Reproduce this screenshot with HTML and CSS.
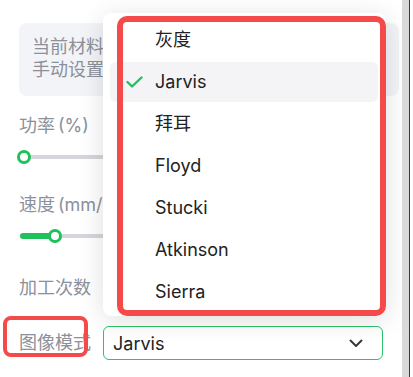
FILE: index.html
```html
<!DOCTYPE html>
<html lang="zh">
<head>
<meta charset="utf-8">
<link rel="stylesheet" href="styles.css">
</head>
<body>
<div class="page">
  <main class="panel">
    <div class="info">
      <div>当前材料</div>
      <div>手动设置</div>
    </div>
    <div class="label l-power">功率<span class="unit">(%)</span></div>
    <div class="slider s1">
      <div class="track"></div>
      <div class="fill" style="width:5px"></div>
      <div class="knob" style="left:-2px"></div>
    </div>
    <div class="label l-speed">速度<span class="unit">(mm/s)</span></div>
    <div class="slider s2">
      <div class="track"></div>
      <div class="fill" style="width:36px"></div>
      <div class="knob" style="left:29px"></div>
    </div>
    <div class="label l-count">加工次数</div>
    <div class="row">
      <div class="label row-label">图像模式</div>
      <div class="select">
        <span class="select-value">Jarvis</span>
        <svg class="chev" width="14" height="9" viewBox="0 0 14 9"><path d="M1.5 1.5 L7 7 L12.5 1.5" fill="none" stroke="#3a3a3a" stroke-width="2" stroke-linecap="round" stroke-linejoin="round"/></svg>
      </div>
    </div>

    <div class="popup">
      <div class="item">灰度</div>
      <div class="item active">
        <svg class="check" width="17" height="12" viewBox="0 0 17 12"><path d="M1.5 6 L6 10.5 L15.5 1.5" fill="none" stroke="#22c062" stroke-width="2.4" stroke-linecap="round" stroke-linejoin="round"/></svg>
        Jarvis
      </div>
      <div class="item">拜耳</div>
      <div class="item">Floyd</div>
      <div class="item">Stucki</div>
      <div class="item">Atkinson</div>
      <div class="item">Sierra</div>
    </div>
    <div class="mark mark-popup"></div>
    <div class="mark mark-label"></div>
  </main>
  <div class="scrollbar"></div>
  <div class="edge"></div>
</div>
</body>
</html>
```
FILE: styles.css
```css
* { box-sizing: border-box; }
html, body { margin: 0; padding: 0; background: #fff; }
body {
  font-family: Inter, "Noto Sans CJK SC", sans-serif;
  font-size: 18px;
  width: 413px;
  height: 377px;
  overflow: hidden;
}
.page {
  display: flex;
  height: 377px;
}
.panel {
  position: relative;
  width: 402px;
  flex: none;
  height: 377px;
  overflow: hidden;
  padding: 23px 0 0 19px;
}
.scrollbar {
  width: 7px;
  background: #d9d9d9;
  flex: none;
}
.edge {
  width: 1px;
  background: #3a3a3a;
  flex: none;
}
.info {
  width: 380px;
  background: #f3f4f7;
  border-radius: 8px;
  padding: 12px 13px 15px;
  color: #8b909a;
  line-height: 23px;
  font-size: 18px;
}
.label {
  color: #8b909a;
  line-height: 24px;
  height: 24px;
  white-space: nowrap;
}
.unit { margin-left: 3px; }
.l-power { margin-top: 18px; }
.l-speed { margin-top: 29px; }
.l-count { margin-top: 33px; }
.slider {
  position: relative;
  height: 14px;
  margin-top: 12px;
  width: 364px;
}
.track {
  position: absolute;
  left: 1px; right: 0;
  top: 5px;
  height: 4px;
  border-radius: 2px;
  background: #d5d6db;
}
.fill {
  position: absolute;
  left: 1px;
  top: 4px;
  height: 6px;
  border-radius: 3px;
  background: #20c05c;
}
.knob {
  position: absolute;
  top: 0;
  width: 14px;
  height: 14px;
  border-radius: 50%;
  background: #fff;
  border: 3px solid #20c05c;
}
.s2 { margin-top: 12px; }
.row {
  display: flex;
  align-items: center;
  margin-top: 26px;
}
.row-label { width: 84px; flex: none; }
.select {
  width: 280px;
  height: 34px;
  border: 1px solid #2cc46a;
  border-radius: 6px;
  display: flex;
  align-items: center;
  justify-content: space-between;
  padding: 0 19px 0 9px;
  color: #222;
}
.chev { display: block; }
.popup {
  position: absolute;
  left: 103px;
  top: 13px;
  width: 283px;
  height: 303px;
  background: #fff;
  border-radius: 8px;
  box-shadow: 0 4px 26px rgba(0,0,0,0.13);
  padding: 7px 8px 4px 7px;
  display: flex;
  flex-direction: column;
  gap: 2px;
}
.item {
  position: relative;
  height: 40px;
  line-height: 40px;
  padding-left: 45px;
  color: #222;
  border-radius: 6px;
}
.item.active { background: #f4f4f6; }
.check {
  position: absolute;
  left: 16px;
  top: 14px;
}
.mark {
  position: absolute;
  border-style: solid;
  border-color: #f44a4a;
}
.mark-popup {
  left: 117px;
  top: 16px;
  width: 269px;
  height: 300px;
  border-width: 6px;
  border-radius: 10px;
}
.mark-label {
  left: 3px;
  top: 316px;
  width: 85px;
  height: 41px;
  border-width: 4px;
  border-radius: 8px;
}
```
